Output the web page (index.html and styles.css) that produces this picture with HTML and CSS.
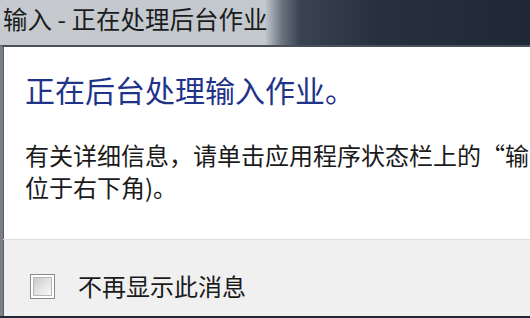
FILE: index.html
```html
<!DOCTYPE html>
<html lang="zh-CN">
<head>
  <meta charset="UTF-8" />
  <title>输入 - 正在处理后台作业</title>
  <link rel="stylesheet" href="styles.css">
</head>
<body>
  <div class="window">
    <div class="titlebar">输入 - 正在处理后台作业</div>
    <div class="frame">
      <div class="content">
        <h1>正在后台处理输入作业。</h1>
        <p>有关详细信息，请单击应用程序状态栏上的“输入”图标(<br>位于右下角)。</p>
      </div>
      <div class="footer">
        <label class="check">
          <span class="box"></span>
          不再显示此消息
        </label>
      </div>
    </div>
  </div>
</body>
</html>
```

FILE: styles.css
```css
body {
  margin: 0;
  width: 530px;
  height: 318px;
  overflow: hidden;
  font-family: "Noto Sans CJK SC", "Noto Sans", sans-serif;
  background: #1e2835;
}
.window {
  width: 760px;
}
.titlebar {
  height: 45px;
  padding-left: 3px;
  font-size: 24.5px;
  line-height: 38px;
  color: #1a1c20;
  background: linear-gradient(90deg, #c6cacf 0px, #c3c8cd 265px, #6a7380 282px, #3a4451 300px, #27313e 380px, #1f2936 530px);
}
.frame {
  border-top: 2px solid #4b5058;
  border-left: 3px solid #7a7f85;
  background: #fff;
}
.content {
  padding: 24px 0 36px 22px;
  box-shadow: inset 1px 0 0 #5a5f66;
}
h1 {
  margin: 0 0 32px;
  font-size: 30px;
  font-weight: normal;
  line-height: 36px;
  color: #1f3388;
}
p {
  margin: 0;
  font-size: 24px;
  line-height: 32px;
  color: #1a1a1a;
}
.footer {
  height: 76px;
  border-top: 1px solid #dedede;
  background: #f0f0f0;
  padding-left: 27px;
  box-shadow: inset 1px 0 0 #5a5f66;
}
.check {
  display: flex;
  align-items: center;
  gap: 23px;
  padding-top: 33px;
  font-size: 24px;
  line-height: 26px;
  color: #1a1a1a;
}
.box {
  width: 25px;
  height: 25px;
  box-sizing: border-box;
  border: 1px solid #8a8a8a;
  background: #fff;
  padding: 2px;
  flex: none;
}
.box::before {
  content: "";
  display: block;
  width: 100%;
  height: 100%;
  box-sizing: border-box;
  border: 1px solid #b8b8b8;
  background: linear-gradient(135deg, #c9c9c9 0%, #e6e6e6 55%, #f8f8f8 100%);
}
```
